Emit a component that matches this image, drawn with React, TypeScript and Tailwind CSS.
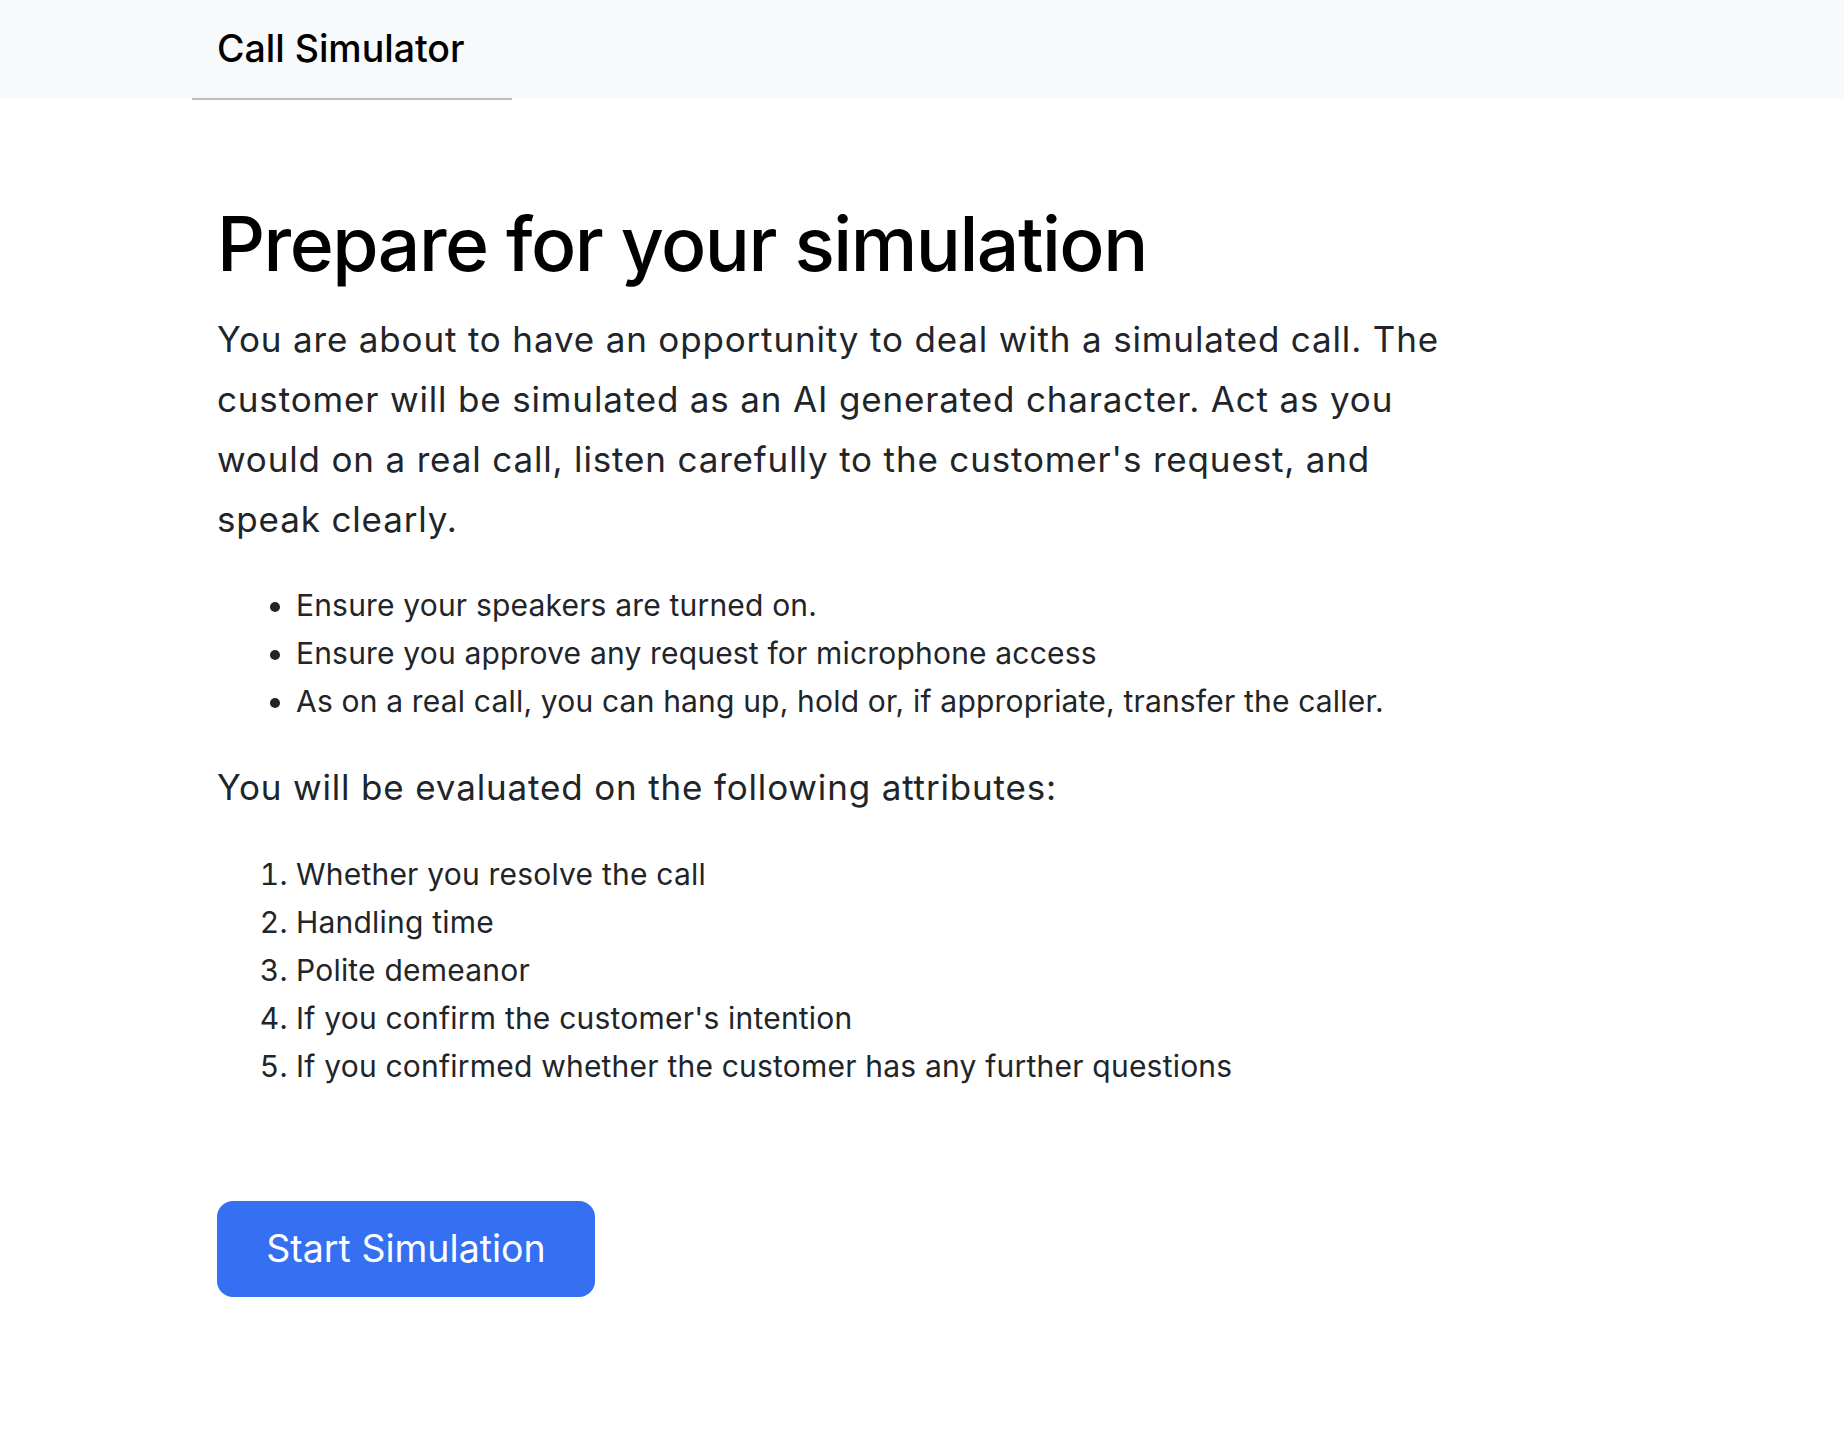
import React from 'react';

const CHECKS = [
  'Ensure your speakers are turned on.',
  'Ensure you approve any request for microphone access',
  'As on a real call, you can hang up, hold or, if appropriate, transfer the caller.',
];

const ATTRIBUTES = [
  'Whether you resolve the call',
  'Handling time',
  'Polite demeanor',
  "If you confirm the customer's intention",
  'If you confirmed whether the customer has any further questions',
];

const App: React.FC = () => {
  return (
    <div className="min-h-screen bg-white font-['Inter','Liberation_Sans',sans-serif] text-[#212529]">
      {/* Top bar */}
      <header className="h-[98px] bg-[#f8f9fa] flex items-center">
        <div className="ml-[217px] text-[37.5px] font-medium text-black leading-none">Call Simulator</div>
      </header>
      <div className="ml-[192px] w-[320px] h-[2px] bg-[#bdbdbd]" />

      <main className="pl-[217px]">
        <h1 className="mt-[96px] text-[75px] leading-[96px] font-medium text-black tracking-[-0.02em]">
          Prepare for your simulation
        </h1>

        <p className="mt-[17px] max-w-[1235px] text-[35px] leading-[60px] tracking-[0.024em]">
          You are about to have an opportunity to deal with a simulated call. The customer will be
          simulated as an AI generated character. Act as you would on a real call, listen carefully to
          the customer's request, and speak clearly.
        </p>

        <ul className="mt-[32px] list-disc pl-[79px] text-[30px] leading-[48px] tracking-[0.006em]">
          {CHECKS.map((item) => (
            <li key={item}>{item}</li>
          ))}
        </ul>

        <h4 className="mt-[32px] text-[35px] leading-[60px] tracking-[0.024em]">
          You will be evaluated on the following attributes:
        </h4>

        <ol className="mt-[33px] list-decimal pl-[79px] text-[30px] leading-[48px] tracking-[0.007em]">
          {ATTRIBUTES.map((item) => (
            <li key={item}>{item}</li>
          ))}
        </ol>

        <button className="mt-[111px] w-[378px] h-[96px] rounded-[16px] bg-[#3570f2] text-white text-[37.5px] leading-none">
          Start Simulation
        </button>
      </main>
    </div>
  );
};

export default App;
